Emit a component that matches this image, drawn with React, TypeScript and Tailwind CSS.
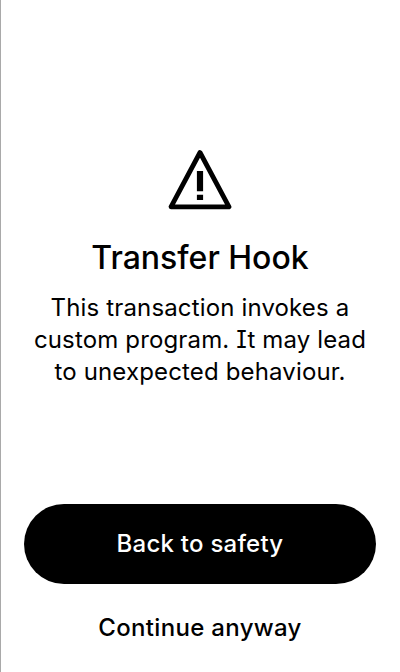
export default function App() {
  return (
    <main className="flex h-[672px] w-[400px] flex-col overflow-hidden border-l border-[#a9a9a9] bg-white pr-px font-['Inter',sans-serif] text-black">
      <section className="flex flex-col items-center pt-[148px] text-center">
        <svg className="h-16 w-16" viewBox="0 0 64 64" fill="none" stroke="currentColor">
          <path d="M32 4.5L61 58.8H3Z" strokeWidth="4.8" strokeLinejoin="round" />
          <path d="M32 23v20.3M32 46.8v5.2" strokeWidth="6.2" />
        </svg>
        <h1 className="mt-[26px] text-[32px] leading-10 font-medium">Transfer Hook</h1>
        <p className="mt-[14px] text-2xl leading-8 font-normal tracking-[0.15px] whitespace-nowrap">
          This transaction invokes a<br />custom program. <span className="[font-feature-settings:'cv08']">It</span> may lead<br />to unexpected behaviour.
        </p>
      </section>
      <div className="mt-auto flex flex-col px-[23px]">
        <button className="h-20 rounded-full bg-black text-2xl font-medium tracking-[0.24px] text-white">Back to safety</button>
        <button className="h-[88px] text-2xl font-medium tracking-[0.32px]">Continue anyway</button>
      </div>
    </main>
  );
}
